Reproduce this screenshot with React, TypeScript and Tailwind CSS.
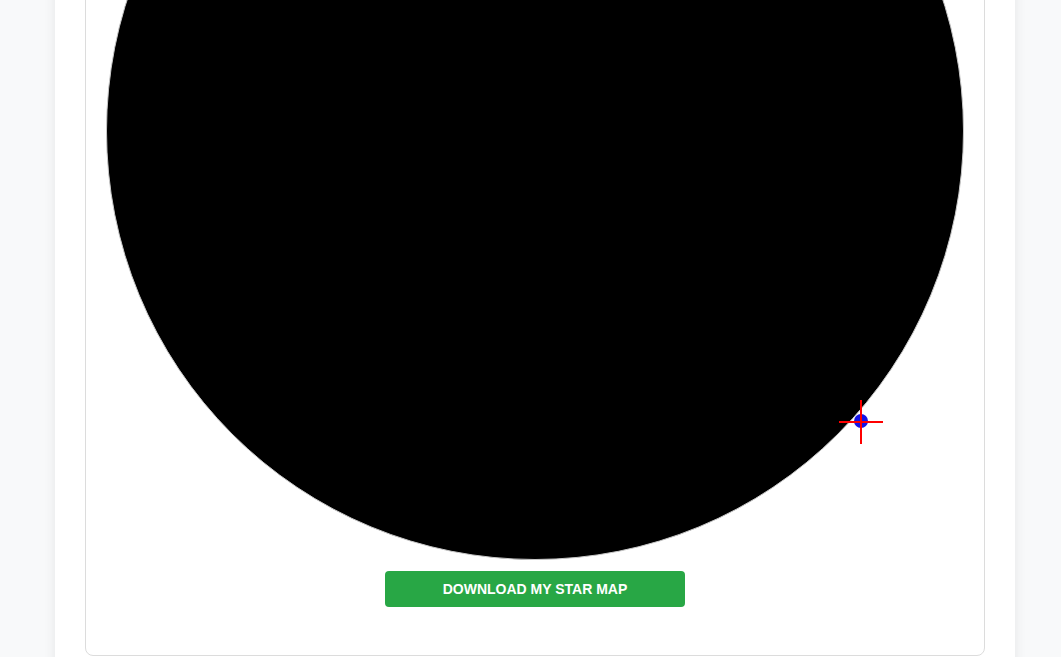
export default function App() {
  return (
    <div className="relative h-[657px] overflow-hidden bg-[#f8f9fa]" style={{ fontFamily: '"Liberation Sans", Arial, sans-serif' }}>
      <div className="ml-[55px] mt-[-349px] w-[960px] bg-white px-[30px] pt-[30px] pb-[40px] shadow-[0_0_12px_rgba(0,0,0,0.08)]">
        <div className="rounded-lg border border-[#dcdcdc] px-[20px] pt-[20px] pb-[48px]">
          <div className="relative flex flex-col items-center">
            <div className="h-[858px] w-[858px] rounded-full border border-[#c8c8c8] bg-black" />
            {/* click marker */}
            <div className="absolute left-[733px] top-[698px] h-[44px] w-[44px]">
              <div className="absolute left-[15px] top-[14px] h-[14px] w-[14px] rounded-full bg-[#1414e6]" />
              <div className="absolute left-0 top-[21px] h-[2px] w-[44px] bg-[#ff0000]" />
              <div className="absolute left-[21px] top-0 h-[44px] w-[2px] bg-[#ff0000]" />
            </div>
            <button className="mt-[11px] h-[36px] w-[300px] rounded bg-[#28a745] text-[14px] font-bold uppercase text-white">
              Download my star map
            </button>
          </div>
        </div>
      </div>
    </div>
  )
}
